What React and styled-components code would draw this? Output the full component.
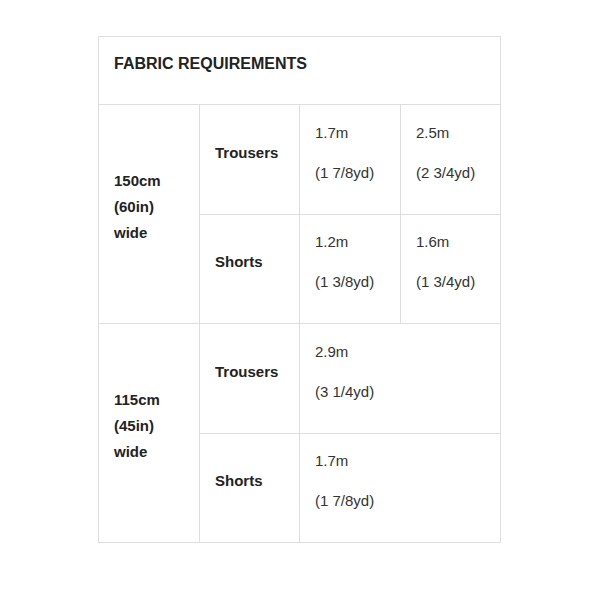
import React from 'react'
import styled, { createGlobalStyle } from 'styled-components'

const GlobalStyle = createGlobalStyle`
    html, body {
        margin: 0;
        padding: 0;
        background: #ffffff;
    }
    body {
        font-family: "Liberation Sans", Arial, sans-serif;
        color: #333333;
    }
`

const Page = styled.div`
    width: 600px;
    height: 600px;
    padding: 36px 0 0 98px;
    box-sizing: border-box;
`

const Table = styled.table`
    width: 402px;
    table-layout: fixed;
    border-collapse: collapse;
    font-size: 15px;
`

const HeaderRow = styled.tr`
    height: 68px;
`

const Row = styled.tr`
    height: ${(p) => p.$height}px;
`

const Cell = styled.td`
    border: 1px solid #dedede;
    padding: 0 15px;
    vertical-align: middle;
    font-size: ${(p) => (p.$title ? 16 : 15)}px;
    font-weight: ${(p) => (p.$bold || p.$title ? 700 : 400)};
    color: ${(p) => (p.$bold || p.$title ? '#222222' : '#333333')};
`

const Text = styled.p`
    margin: 0 0 14px;
    line-height: 26px;
`

const Amount = ({ metres, yards, span = 1 }) => (
    <Cell colSpan={span}>
        <Text>{metres}</Text>
        <Text>{yards}</Text>
    </Cell>
)

const Garment = ({ name }) => (
    <Cell $bold>
        <Text>{name}</Text>
    </Cell>
)

const Width = ({ lines }) => (
    <Cell $bold rowSpan={2}>
        <Text>
            {lines.map((l, i) => (
                <React.Fragment key={i}>
                    {l}
                    {i < lines.length - 1 && <br />}
                </React.Fragment>
            ))}
        </Text>
    </Cell>
)

const App = () => (
    <Page>
        <GlobalStyle />
        <Table>
            <colgroup>
                <col style={{ width: 101 }} />
                <col style={{ width: 100 }} />
                <col style={{ width: 101 }} />
                <col style={{ width: 100 }} />
            </colgroup>
            <tbody>
                <HeaderRow>
                    <Cell $title colSpan={4}>
                        <Text>FABRIC REQUIREMENTS</Text>
                    </Cell>
                </HeaderRow>
                <Row $height={110}>
                    <Width lines={['150cm', '(60in)', 'wide']} />
                    <Garment name="Trousers" />
                    <Amount metres="1.7m" yards="(1 7/8yd)" />
                    <Amount metres="2.5m" yards="(2 3/4yd)" />
                </Row>
                <Row $height={109}>
                    <Garment name="Shorts" />
                    <Amount metres="1.2m" yards="(1 3/8yd)" />
                    <Amount metres="1.6m" yards="(1 3/4yd)" />
                </Row>
                <Row $height={110}>
                    <Width lines={['115cm', '(45in)', 'wide']} />
                    <Garment name="Trousers" />
                    <Amount metres="2.9m" yards="(3 1/4yd)" span={2} />
                </Row>
                <Row $height={109}>
                    <Garment name="Shorts" />
                    <Amount metres="1.7m" yards="(1 7/8yd)" span={2} />
                </Row>
            </tbody>
        </Table>
    </Page>
)

export default App
